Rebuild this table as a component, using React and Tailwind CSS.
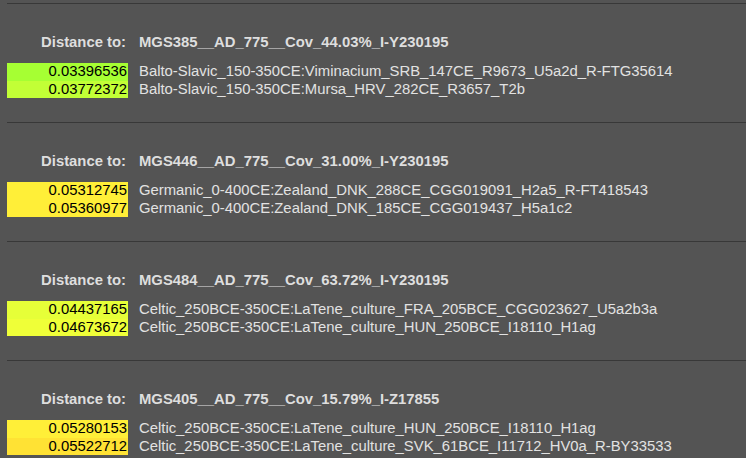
const groups = [
  {
    target: 'MGS385__AD_775__Cov_44.03%_I-Y230195',
    rows: [
      { d: '0.03396536', bg: 'bg-[#a6ff33]', name: 'Balto-Slavic_150-350CE:Viminacium_SRB_147CE_R9673_U5a2d_R-FTG35614' },
      { d: '0.03772372', bg: 'bg-[#c2ff36]', name: 'Balto-Slavic_150-350CE:Mursa_HRV_282CE_R3657_T2b' },
    ],
  },
  {
    target: 'MGS446__AD_775__Cov_31.00%_I-Y230195',
    rows: [
      { d: '0.05312745', bg: 'bg-[#ffef38]', name: 'Germanic_0-400CE:Zealand_DNK_288CE_CGG019091_H2a5_R-FT418543' },
      { d: '0.05360977', bg: 'bg-[#ffee38]', name: 'Germanic_0-400CE:Zealand_DNK_185CE_CGG019437_H5a1c2' },
    ],
  },
  {
    target: 'MGS484__AD_775__Cov_63.72%_I-Y230195',
    rows: [
      { d: '0.04437165', bg: 'bg-[#e6ff38]', name: 'Celtic_250BCE-350CE:LaTene_culture_FRA_205BCE_CGG023627_U5a2b3a' },
      { d: '0.04673672', bg: 'bg-[#efff38]', name: 'Celtic_250BCE-350CE:LaTene_culture_HUN_250BCE_I18110_H1ag' },
    ],
  },
  {
    target: 'MGS405__AD_775__Cov_15.79%_I-Z17855',
    rows: [
      { d: '0.05280153', bg: 'bg-[#ffef38]', name: 'Celtic_250BCE-350CE:LaTene_culture_HUN_250BCE_I18110_H1ag' },
      { d: '0.05522712', bg: 'bg-[#ffe234]', name: 'Celtic_250BCE-350CE:LaTene_culture_SVK_61BCE_I11712_HV0a_R-BY33533' },
    ],
  },
]

function Group({ target, rows }) {
  return (
    <section className="border-t border-[#383838] pt-[30px] pb-[24px]">
      <div className="flex items-baseline leading-[17px] font-bold text-[#dedede]">
        <span className="w-[121px] shrink-0 pr-[2px] text-right">Distance to:</span>
        <span className="pl-[11px] whitespace-nowrap">{target}</span>
      </div>
      <div className="mt-[12px] flex flex-col">
        {rows.map((r) => (
          <div key={r.d} className="flex leading-[17.5px]">
            <span className={`w-[121px] shrink-0 pr-[1px] text-right text-black ${r.bg}`}>{r.d}</span>
            <span className="pl-[11px] whitespace-nowrap text-[#e2e2e2]">{r.name}</span>
          </div>
        ))}
      </div>
    </section>
  )
}

export default function App() {
  return (
    <div className="h-[458px] w-[746px] overflow-hidden bg-[#545454] pt-[3px] pl-[7px] font-['Liberation_Sans',Arial,sans-serif] text-[14.85px]">
      {groups.map((g) => (
        <Group key={g.target} {...g} />
      ))}
    </div>
  )
}
